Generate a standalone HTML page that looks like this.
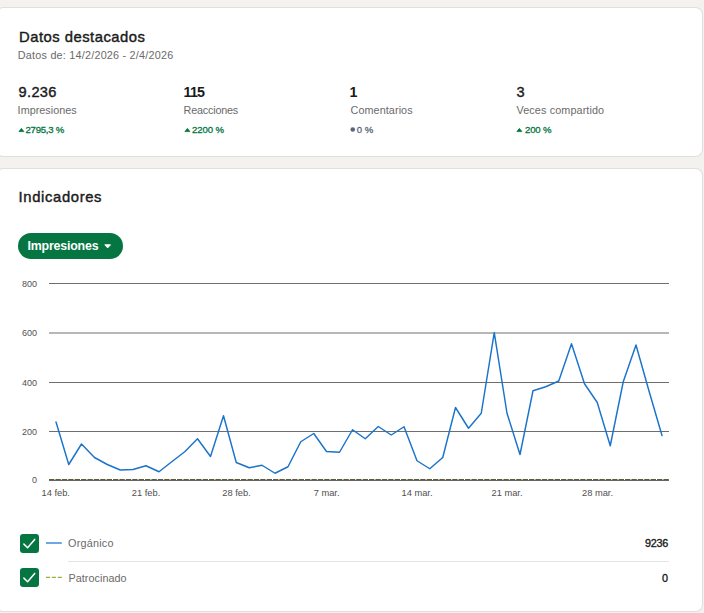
<!DOCTYPE html>
<html lang="es">
<head>
<meta charset="utf-8">
<title>Datos destacados</title>
<style>
html,body{margin:0;padding:0;}
body{width:704px;height:613px;overflow:hidden;background:#f3f2ee;position:relative;font-family:"Liberation Sans",sans-serif;color:#1a1a1a;}
.card{position:absolute;background:#fff;border-radius:6.5px;box-shadow:0 0 0 1px rgba(0,0,0,0.08);}
.t{position:absolute;white-space:nowrap;line-height:1;}
.h{font-weight:normal;-webkit-text-stroke:0.4px #1a1a1a;color:#1a1a1a;}
.sub{color:#6a6a6a;}
.num{font-weight:normal;-webkit-text-stroke:0.4px #1a1a1a;color:#1a1a1a;}
.lab{color:#6a6a6a;}
.num1{font-weight:bold;color:#1a1a1a;}
.chg{color:#057642;-webkit-text-stroke:0.3px #057642;}
.chg.neu{color:#56687a;-webkit-text-stroke:0.3px #56687a;}
.tri{position:absolute;}
.dot{position:absolute;width:4.6px;height:4.6px;border-radius:50%;background:#56687a;}
.btn{position:absolute;left:17.7px;top:233.2px;width:105.6px;height:25.5px;border-radius:13px;background:#057642;}
.bt{color:#fff;font-weight:bold;}
.cb{position:absolute;width:19px;height:18.8px;border-radius:3px;background:#057642;}
.cb svg{position:absolute;left:0;top:0;}
.leg{color:#6a6a6a;}
.val{color:#1a1a1a;-webkit-text-stroke:0.35px #1a1a1a;text-align:right;}
.div{position:absolute;height:1px;background:#e4e4e2;}
</style>
</head>
<body>
<section aria-label="Datos destacados">
<div class="card" id="c1" style="left:-3.5px;top:8px;width:705.5px;height:148px;"></div>

<div class="t h" id="t1" style="left:19.02px;top:30.00px;font-size:14.8px;letter-spacing:0.492px;">Datos destacados</div>
<div class="t sub" id="t2" style="left:17.85px;top:50.00px;font-size:10.8px;letter-spacing:0.223px;">Datos de: 14/2/2026 - 2/4/2026</div>

<div class="t num" id="n1" style="left:18.50px;top:85.00px;font-size:14.6px;letter-spacing:0.360px;">9.236</div>
<div class="t lab" id="l1" style="left:17.60px;top:105.00px;font-size:10.8px;letter-spacing:0.036px;">Impresiones</div>
<svg class="tri" style="left:17.5px;top:127px" width="7" height="6" viewBox="0 0 7 6"><path d="M3.4 1.4 L5.9 4.6 L0.9 4.6 Z" fill="#057642" stroke="#057642" stroke-width="0.8" stroke-linejoin="round"/></svg>
<div class="t chg" id="g1" style="left:25.52px;top:125.00px;font-size:9.6px;letter-spacing:-0.270px;">2795,3 %</div>

<div class="t num1" id="n2" style="left:183.60px;top:85.00px;font-size:14.3px;letter-spacing:-0.800px;">115</div>
<div class="t lab" id="l2" style="left:183.60px;top:105.00px;font-size:10.8px;letter-spacing:-0.200px;">Reacciones</div>
<svg class="tri" style="left:183.5px;top:127px" width="7" height="6" viewBox="0 0 7 6"><path d="M3.4 1.4 L5.9 4.6 L0.9 4.6 Z" fill="#057642" stroke="#057642" stroke-width="0.8" stroke-linejoin="round"/></svg>
<div class="t chg" id="g2" style="left:192.00px;top:125.00px;font-size:9.6px;letter-spacing:-0.100px;">2200 %</div>

<div class="t num1" id="n3" style="left:349.60px;top:85.00px;font-size:14.3px;letter-spacing:0.000px;">1</div>
<div class="t lab" id="l3" style="left:350.50px;top:105.00px;font-size:10.8px;letter-spacing:0.090px;">Comentarios</div>
<svg class="tri" style="left:349px;top:126px" width="8" height="8" viewBox="0 0 8 8"><circle cx="3.75" cy="3.5" r="2.3" fill="#56687a"/></svg>
<div class="t chg neu" id="g3" style="left:356.75px;top:125.00px;font-size:9.6px;letter-spacing:0.000px;">0 %</div>

<div class="t num" id="n4" style="left:516.50px;top:85.00px;font-size:14.6px;letter-spacing:0.000px;">3</div>
<div class="t lab" id="l4" style="left:516.50px;top:105.00px;font-size:10.8px;letter-spacing:0.120px;">Veces compartido</div>
<svg class="tri" style="left:515.5px;top:127px" width="7" height="6" viewBox="0 0 7 6"><path d="M3.4 1.4 L5.9 4.6 L0.9 4.6 Z" fill="#057642" stroke="#057642" stroke-width="0.8" stroke-linejoin="round"/></svg>
<div class="t chg" id="g4" style="left:525.00px;top:125.00px;font-size:9.6px;letter-spacing:-0.170px;">200 %</div>

</section>
<section aria-label="Indicadores">
<div class="card" id="c2" style="left:-3.5px;top:169px;width:705.5px;height:442px;"></div>
<div class="t h" id="t3" style="left:18.54px;top:190.00px;font-size:14.8px;letter-spacing:0.648px;">Indicadores</div>

<div class="btn"></div>
<div class="t bt" id="b1" style="left:27.54px;top:240.00px;font-size:12.4px;letter-spacing:-0.198px;">Impresiones</div>
<svg style="position:absolute;left:103px;top:242.5px" width="9" height="7" viewBox="0 0 9 7"><path d="M1.8 1.8 L7.5 1.8 L4.65 4.9 Z" fill="#fff" stroke="#fff" stroke-width="1" stroke-linejoin="round"/></svg>

<svg id="chart" style="position:absolute;left:0;top:0" width="704" height="613" viewBox="0 0 704 613" font-family="'Liberation Sans',sans-serif">
<g stroke="#6e6e6e" stroke-width="1" shape-rendering="crispEdges">
<line x1="49" x2="669" y1="283.5" y2="283.5"/>
<line x1="49" x2="669" y1="382.5" y2="382.5"/>
<line x1="49" x2="669" y1="431.5" y2="431.5"/>
</g>
<line x1="49" x2="669" y1="333" y2="333" stroke="#6e6e6e" stroke-width="1"/>
<line x1="49" x2="669" y1="480.5" y2="480.5" stroke="#66665e" stroke-width="1" shape-rendering="crispEdges"/>
<line x1="49" x2="669" y1="479.5" y2="479.5" stroke="#5c5c3c" stroke-width="1" stroke-dasharray="5.4 1"/>
<g font-size="9" fill="#505050" text-anchor="end">
<text x="37" y="286.7">800</text>
<text x="37" y="336.2">600</text>
<text x="37" y="385.7">400</text>
<text x="37" y="434.7">200</text>
<text x="37" y="482.9">0</text>
</g>
<g font-size="9.3" fill="#505050" text-anchor="middle">
<text x="55.7" y="495.7">14 feb.</text>
<text x="146" y="495.7">21 feb.</text>
<text x="236.5" y="495.7">28 feb.</text>
<text x="326.6" y="495.7">7 mar.</text>
<text x="417" y="495.7">14 mar.</text>
<text x="507" y="495.7">21 mar.</text>
<text x="597.5" y="495.7">28 mar.</text>
</g>
<polyline fill="none" stroke="#1b73ca" stroke-width="1.45" stroke-linejoin="round" stroke-linecap="round" points="56,422 68.75,464.5 81.5,444 94.5,457.5 107.25,464.5 120.25,470 133,469.5 146,465.75 159,471.75 171.75,461.75 184.75,451.75 197.5,438.75 210.5,456.5 223.5,415.75 236.25,462.5 249.25,467.75 262,465.25 275,473.25 288,466.75 300.75,441.75 313.75,433.5 326.5,451.5 339.5,452.25 352.5,429.75 365.25,438.75 378.25,426.5 391.25,435 404,426.75 417,460.75 429.75,468.75 442.75,457.5 455.5,407.5 468.5,428.25 481.25,413.25 494.25,332.6 507,413.25 520,454.5 533,390.75 545.75,386.75 558.75,381 571.5,343.75 584.5,383.75 597.25,402.5 610.25,445.75 623.25,381.75 636,345 649,391 662,435.5"/>
<line x1="46" x2="61.8" y1="543" y2="543" stroke="#4a90e2" stroke-width="1.6"/>
<line x1="46" x2="61.8" y1="577.4" y2="577.4" stroke="#a3ab3a" stroke-width="1.4" stroke-dasharray="4.1 1.75"/>
</svg>

<div class="cb" style="left:20.1px;top:534px;"><svg width="19" height="19" viewBox="0 0 19 19"><path d="M3.9 10.1 L7.6 13.7 L14.7 5.4" fill="none" stroke="#fff" stroke-width="1.5" stroke-linecap="round" stroke-linejoin="round"/></svg></div>
<div class="cb" style="left:20.1px;top:568px;"><svg width="19" height="19" viewBox="0 0 19 19"><path d="M3.9 10.1 L7.6 13.7 L14.7 5.4" fill="none" stroke="#fff" stroke-width="1.5" stroke-linecap="round" stroke-linejoin="round"/></svg></div>
<div class="t leg" id="e1" style="left:68.02px;top:538.00px;font-size:10.8px;letter-spacing:0.231px;">Orgánico</div>
<div class="t leg" id="e2" style="left:68.54px;top:573.00px;font-size:10.8px;letter-spacing:0.036px;">Patrocinado</div>
<div class="t val" id="v1" style="right:36.00px;top:538.00px;font-size:10.8px;letter-spacing:-0.240px;">9236</div>
<div class="t val" id="v2" style="right:36.00px;top:573.00px;font-size:10.8px;letter-spacing:0.000px;">0</div>
<div class="div" style="left:68.2px;top:561px;width:600.5px;"></div>
</section>
</body>
</html>
